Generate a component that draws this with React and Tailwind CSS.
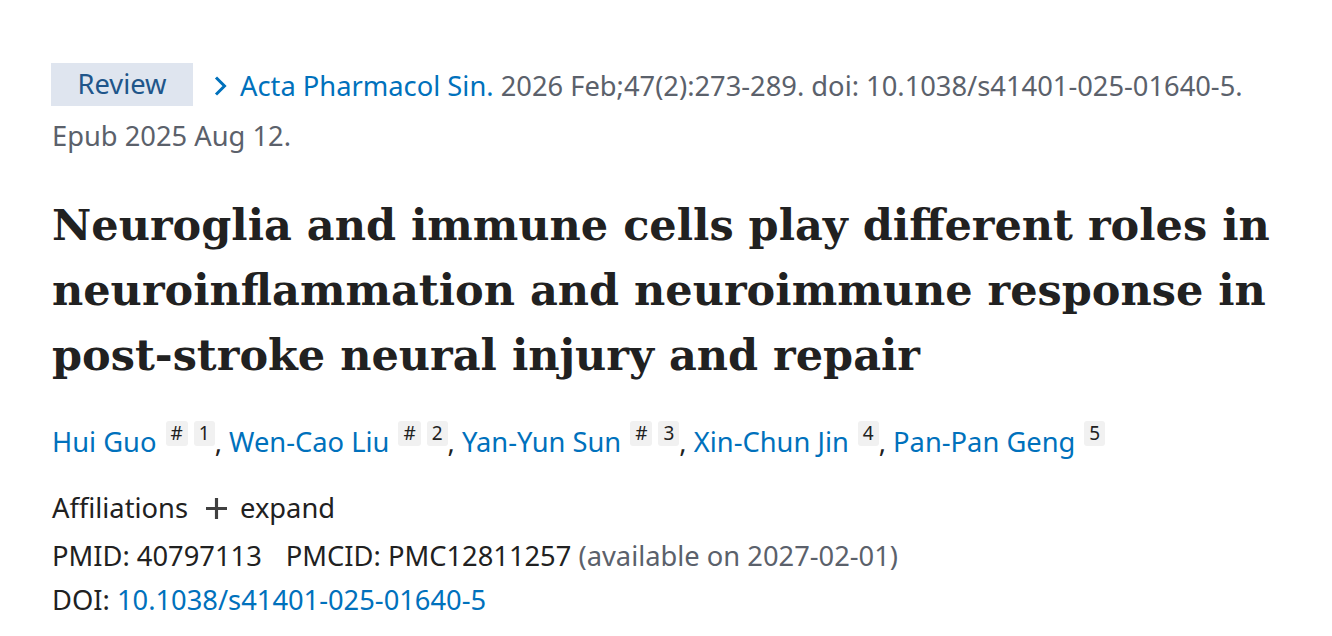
const sans = { fontFamily: '"Noto Sans", "Open Sans", sans-serif' };

const authors = [
  { name: 'Hui Guo', equal: true, aff: '1' },
  { name: 'Wen-Cao Liu', equal: true, aff: '2' },
  { name: 'Yan-Yun Sun', equal: true, aff: '3' },
  { name: 'Xin-Chun Jin', equal: false, aff: '4' },
  { name: 'Pan-Pan Geng', equal: false, aff: '5' },
];

// small grey box used for the "#" and affiliation numbers
const Sup = ({ children, first }) => (
  <span
    className={`${first ? 'ml-[9px]' : 'ml-[6px]'} inline-block h-[25px] min-w-[19px] overflow-hidden rounded-[3px] bg-[#f1f1f1] px-[5px] text-center align-[6px] text-[19px] leading-[25px] text-[#212121]`}
  >
    {children}
  </span>
);

export default function App() {
  return (
    <div className="min-h-screen bg-white pl-[51px] pt-[63px] text-[#212121]" style={sans}>
      {/* Citation */}
      <div className="flex h-[43px] items-center pt-[3px] text-[27.3px] text-[#5b616b]">
        <span className="-mt-[3px] flex h-[43px] w-[142px] items-center justify-center bg-[#dfe5ef] text-[#20558a]">
          Review
        </span>
        <svg className="ml-[20px] mr-[12px] h-[22px] w-[15px] text-[#0071bc]" viewBox="0 0 15 22" fill="none">
          <path d="M3 2.5 L11.5 11 L3 19.5" stroke="currentColor" strokeWidth="3" />
        </svg>
        <span className="whitespace-nowrap">
          <a className="text-[#0071bc]">Acta Pharmacol Sin.</a> 2026 Feb;47(2):273-289. doi: 10.1038/s41401-025-01640-5.
        </span>
      </div>
      <div className="mt-[10px] pl-px text-[27.3px] leading-[40px] text-[#5b616b]">Epub 2025 Aug 12.</div>

      {/* Title */}
      <h1
        className="mt-[37px] pl-px text-[43px] font-bold leading-[65px] text-[#212121]"
        style={{ fontFamily: '"DejaVu Serif", "Liberation Serif", serif' }}
      >
        Neuroglia and immune cells play different roles in
        <br />
        neuroinflammation and neuroimmune response in
        <br />
        post-stroke neural injury and repair
      </h1>

      {/* Authors */}
      <div className="mt-[33px] pl-px text-[27.3px] leading-[40px]">
        {authors.map((a, i) => (
          <span key={a.name}>
            <a className="text-[#0071bc]">{a.name}</a>
            {a.equal && <Sup first>#</Sup>}
            <Sup first={!a.equal}>{a.aff}</Sup>
            {i < authors.length - 1 && ', '}
          </span>
        ))}
      </div>

      {/* Affiliations */}
      <div className="mt-[26px] flex h-[40px] items-center pl-px text-[27.3px]">
        <span>Affiliations</span>
        <svg className="ml-[18px] mr-[13px] h-[21px] w-[21px] text-[#404040]" viewBox="0 0 20 20" fill="none">
          <path d="M10 0 V20 M0 10 H20" stroke="currentColor" strokeWidth="3" />
        </svg>
        <span>expand</span>
      </div>

      {/* Identifiers */}
      <div className="mt-[6px] pl-px text-[27.3px] leading-[44px]">
        <div>
          <span className="mr-[24px]">PMID: 40797113</span>
          <span>PMCID: PMC12811257</span>{' '}
          <span className="text-[#5b616b]">(available on 2027-02-01)</span>
        </div>
        <div>
          DOI: <a className="text-[#0071bc]">10.1038/s41401-025-01640-5</a>
        </div>
      </div>
    </div>
  );
}
